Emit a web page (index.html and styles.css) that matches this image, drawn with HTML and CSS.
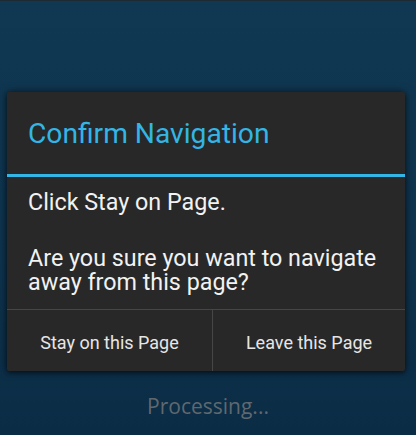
FILE: index.html
```html
<!DOCTYPE html>
<html lang="en">
<head>
  <meta charset="UTF-8">
  <meta name="viewport" content="width=device-width, initial-scale=1.0">
  <title>Confirm Navigation</title>
  <link rel="stylesheet" href="styles.css">
</head>
<body>
  <div class="screen">
    <div class="dialog">
      <header class="dialog-header">
        <h1 class="dialog-title">Confirm Navigation</h1>
      </header>

      <div class="dialog-body">
        <p class="message">Click Stay on Page.</p>
        <p class="message message-question">Are you sure you want to navigate away from this page?</p>
      </div>

      <div class="button-row">
        <button class="dialog-button">Stay on this Page</button>
        <button class="dialog-button dialog-button-right">Leave this Page</button>
      </div>
    </div>

    <p class="status">Processing...</p>
  </div>
</body>
</html>
```

FILE: styles.css
```css
html,
body {
  margin: 0;
  padding: 0;
  height: 100%;
}

body {
  font-family: Roboto, 'Liberation Sans', sans-serif;
  background: linear-gradient(to bottom, #103852 0%, #0e334d 60%, #0b2c45 100%);
  border-top: 1px solid #1e2a33;
  box-sizing: border-box;
}

.screen {
  padding-top: 91px;
  display: flex;
  flex-direction: column;
}

.dialog {
  margin-left: 7px;
  width: 398px;
  background: #282828;
  border-radius: 2px;
  box-shadow: 0 0 8px rgba(0, 0, 0, 0.55), 0 2px 4px rgba(0, 0, 0, 0.4);
}

.dialog-header {
  padding: 26px 21px 24px;
  border-bottom: 3px solid #33b5e5;
}

.dialog-title {
  margin: 0;
  font-size: 28.2px;
  line-height: 32px;
  font-weight: 400;
  color: #33b5e5;
}

.dialog-body {
  padding: 13px 21px 15px;
  border-bottom: 1px solid #464646;
}

.message {
  margin: 0;
  font-size: 23.3px;
  line-height: 24px;
  color: #f2f2f2;
}

.message-question {
  margin-top: 32px;
}

.button-row {
  display: grid;
  grid-template-columns: 205px 1fr;
}

.dialog-button {
  padding: 22px 0 18px;
  background: transparent;
  border: none;
  font-family: Roboto, 'Liberation Sans', sans-serif;
  font-size: 18px;
  line-height: 21px;
  color: #e6e6e6;
  cursor: pointer;
}

.dialog-button-right {
  border-left: 1px solid #464646;
}

.status {
  margin: 21px 0 0;
  text-align: center;
  font-family: 'Open Sans', 'DejaVu Sans', sans-serif;
  font-size: 21px;
  line-height: 28px;
  color: #5f686f;
}
```
